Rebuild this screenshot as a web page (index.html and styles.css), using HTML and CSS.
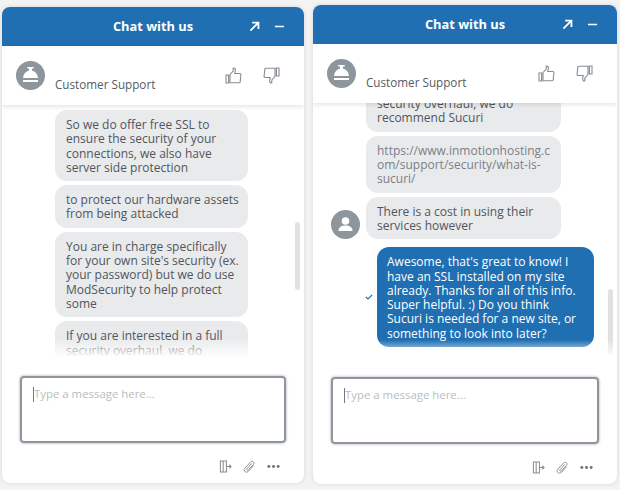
FILE: index.html
```html
<!DOCTYPE html>
<html lang="en">
<head>
  <meta charset="UTF-8">
  <title>Chat with us</title>
  <link rel="stylesheet" href="styles.css">
</head>
<body>
  <div class="chat chat-left">
    <div class="chat-head">
      <span class="chat-title">Chat with us</span>
      <svg class="head-btn btn-open" viewBox="0 0 12 12"><path d="M1.500 10.500 10 2M3.500 1.800h6.800v6.800" fill="none" stroke="#fff" stroke-width="2"/></svg>
      <svg class="head-btn btn-min" viewBox="0 0 12 12"><path d="M1 6h10" stroke="#fff" stroke-width="1.800"/></svg>
    </div>
    <div class="agent-bar">
      <svg class="avatar" viewBox="0 0 29 29">
        <circle cx="14.500" cy="14.500" r="14.500" fill="#8d959d"/>
        <path d="M7 17a7.500 7.500 0 0 1 15 0z" fill="#fff"/>
        <rect x="13" y="7" width="3" height="3" fill="#fff"/>
        <rect x="11" y="6" width="7" height="1.600" rx=".8" fill="#fff"/>
        <rect x="7" y="19" width="15" height="2" fill="#fff"/>
      </svg>
      <span class="agent-name">Customer Support</span>
      <svg class="rate rate-up" viewBox="0 0 17 17"><path d="M5 7.500 8.200 4V1.200c1.400-.4 2.200.6 2.200 1.800L9.800 6.500h5c.8 0 1.200.6 1.100 1.300l-.7 7c-.1.6-.5 1-1.100 1H5zM1 8h2.600v8H1z" fill="none" stroke="#858c93" stroke-width="1.100"/></svg>
      <svg class="rate rate-down" viewBox="0 0 17 17"><path d="M12 9.500 8.800 13v2.800c-1.400.4-2.200-.6-2.200-1.800l.6-3.500h-5c-.8 0-1.200-.6-1.100-1.300l.7-7c.1-.6.5-1 1.100-1H12zM13.400 1H16v8h-2.600z" fill="none" stroke="#858c93" stroke-width="1.100"/></svg>
    </div>
    <div class="messages">
      <div class="msg">So we do offer free SSL to ensure the security of your connections, we also have server side protection</div>
      <div class="msg">to protect our hardware assets from being attacked</div>
      <div class="msg">You are in charge specifically for your own site's security (ex. your password) but we do use ModSecurity to help protect some</div>
      <div class="msg">If you are interested in a full security overhaul, we do recommend Sucuri</div>
      <div class="scroll-thumb"></div>
      <div class="fade"></div>
    </div>
    <div class="composer">
      <div class="input-box"><span class="caret"></span><span class="placeholder">Type a message here...</span></div>
      <div class="tools">
        <svg class="tool" viewBox="0 0 14 14"><path d="M1.500 1h6.500v12H1.500zM4.500 1v12M8 7h5M11 5l2 2-2 2" fill="none" stroke="#858c93" stroke-width="1.100"/></svg>
        <svg class="tool" viewBox="0 0 14 14"><path d="M11.500 6 6 12c-1.400 1.400-3.600 1.200-4.300.2-.8-1-.6-2.400.4-3.500l6-6.500c1-1 2.300-1 3.100-.3.800.8.800 2 0 3L5.800 10.600c-.5.500-1.200.5-1.500.1-.4-.4-.3-1 .2-1.600L9.500 3.600" fill="none" stroke="#858c93" stroke-width="1"/></svg>
        <svg class="tool" viewBox="0 0 14 14"><circle cx="2" cy="7" r="1.600" fill="#6c747b"/><circle cx="7" cy="7" r="1.600" fill="#6c747b"/><circle cx="12" cy="7" r="1.600" fill="#6c747b"/></svg>
      </div>
    </div>
  </div>

  <div class="chat chat-right">
    <div class="chat-head">
      <span class="chat-title">Chat with us</span>
      <svg class="head-btn btn-open" viewBox="0 0 12 12"><path d="M1.500 10.500 10 2M3.500 1.800h6.800v6.800" fill="none" stroke="#fff" stroke-width="2"/></svg>
      <svg class="head-btn btn-min" viewBox="0 0 12 12"><path d="M1 6h10" stroke="#fff" stroke-width="1.800"/></svg>
    </div>
    <div class="agent-bar">
      <svg class="avatar" viewBox="0 0 29 29">
        <circle cx="14.500" cy="14.500" r="14.500" fill="#8d959d"/>
        <path d="M7 17a7.500 7.500 0 0 1 15 0z" fill="#fff"/>
        <rect x="13" y="7" width="3" height="3" fill="#fff"/>
        <rect x="11" y="6" width="7" height="1.600" rx=".8" fill="#fff"/>
        <rect x="7" y="19" width="15" height="2" fill="#fff"/>
      </svg>
      <span class="agent-name">Customer Support</span>
      <svg class="rate rate-up" viewBox="0 0 17 17"><path d="M5 7.500 8.200 4V1.200c1.400-.4 2.200.6 2.200 1.800L9.800 6.500h5c.8 0 1.200.6 1.100 1.300l-.7 7c-.1.6-.5 1-1.100 1H5zM1 8h2.600v8H1z" fill="none" stroke="#858c93" stroke-width="1.100"/></svg>
      <svg class="rate rate-down" viewBox="0 0 17 17"><path d="M12 9.500 8.800 13v2.800c-1.400.4-2.200-.6-2.200-1.800l.6-3.500h-5c-.8 0-1.200-.6-1.100-1.300l.7-7c.1-.6.5-1 1.100-1H12zM13.400 1H16v8h-2.600z" fill="none" stroke="#858c93" stroke-width="1.100"/></svg>
    </div>
    <div class="messages messages-end">
      <div class="msg">If you are interested in a full security overhaul, we do recommend Sucuri</div>
      <div class="msg msg-link">https://www.inmotionhosting.c<br>om/support/security/what-is-<br>sucuri/</div>
      <div class="agent-row">
        <svg class="avatar-small" viewBox="0 0 29 29">
          <circle cx="14.500" cy="14.500" r="14.500" fill="#8d959d"/>
          <circle cx="14.500" cy="11" r="3.800" fill="#fff"/>
          <path d="M7.500 21c0-4 3-5.500 7-5.500s7 1.500 7 5.500z" fill="#fff"/>
        </svg>
        <div class="msg">There is a cost in using their services however</div>
      </div>
      <div class="user-row">
        <svg class="check" viewBox="0 0 8 6"><path d="M.8 3 3 5 7.200.8" fill="none" stroke="#1f6fb2" stroke-width="1.200"/></svg>
        <div class="msg msg-user">Awesome, that's great to know! I have an SSL installed on my site already. Thanks for all of this info. Super helpful. :) Do you think Sucuri is needed for a new site, or something to look into later?</div>
      </div>
      <div class="scroll-thumb"></div>
      <div class="fade"></div>
    </div>
    <div class="composer">
      <div class="input-box"><span class="caret"></span><span class="placeholder">Type a message here...</span></div>
      <div class="tools">
        <svg class="tool" viewBox="0 0 14 14"><path d="M1.500 1h6.500v12H1.500zM4.500 1v12M8 7h5M11 5l2 2-2 2" fill="none" stroke="#858c93" stroke-width="1.100"/></svg>
        <svg class="tool" viewBox="0 0 14 14"><path d="M11.500 6 6 12c-1.400 1.400-3.600 1.200-4.300.2-.8-1-.6-2.400.4-3.500l6-6.500c1-1 2.300-1 3.100-.3.800.8.800 2 0 3L5.800 10.600c-.5.500-1.200.5-1.500.1-.4-.4-.3-1 .2-1.600L9.500 3.600" fill="none" stroke="#858c93" stroke-width="1"/></svg>
        <svg class="tool" viewBox="0 0 14 14"><circle cx="2" cy="7" r="1.600" fill="#6c747b"/><circle cx="7" cy="7" r="1.600" fill="#6c747b"/><circle cx="12" cy="7" r="1.600" fill="#6c747b"/></svg>
      </div>
    </div>
  </div>
</body>
</html>
```

FILE: styles.css
```css
body {
  margin: 0;
  padding: 0 3px 0 2px;
  box-sizing: border-box;
  width: 620px;
  height: 490px;
  overflow: hidden;
  background: #f3f3f3;
  font-family: "Open Sans", Arial, sans-serif;
  display: flex;
  gap: 9px;
  align-items: flex-start;
}
.chat {
  display: flex;
  flex-direction: column;
  background: #fff;
  border-radius: 8px;
  box-shadow: 0 0 4px rgba(0,0,0,0.12);
  overflow: hidden;
}
.chat-left {
  width: 302px;
  height: 476px;
  margin-top: 7px;
}
.chat-right {
  width: 304px;
  height: 479px;
  margin-top: 5px;
}
.chat-head {
  height: 39px;
  box-sizing: border-box;
  padding-bottom: 2px;
  flex: none;
  background: #1f6fb2;
  display: flex;
  align-items: center;
  position: relative;
  justify-content: center;
}
.chat-title {
  color: #fff;
  font-size: 12.8px;
  font-weight: 700;
}
.head-btn {
  position: absolute;
  top: 14px;
  width: 11px;
  height: 11px;
}
.btn-open {
  right: 44px;
}
.btn-min {
  right: 19px;
}
.agent-bar {
  height: 59px;
  flex: none;
  position: relative;
  z-index: 2;
  background: #fff;
  box-shadow: 0 2px 4px rgba(0,0,0,0.1);
  display: flex;
  align-items: flex-start;
  padding: 15px 24px 0 14px;
  box-sizing: border-box;
}
.avatar {
  width: 29px;
  height: 29px;
  flex: none;
}
.agent-name {
  margin: 15px 0 0 10px;
  font-size: 11.7px;
  line-height: 16px;
  color: #555b61;
  flex: 1;
}
.rate {
  width: 17px;
  height: 17px;
  margin-top: 6px;
}
.rate-down {
  margin-left: 21px;
}
.messages {
  flex: 1;
  min-height: 0;
  position: relative;
  overflow: hidden;
  display: flex;
  flex-direction: column;
  gap: 4px;
  padding: 5px 0 0 53px;
}
.messages-end {
  justify-content: flex-end;
  padding-bottom: 11px;
}
.msg {
  flex: none;
  box-sizing: border-box;
  width: 193px;
  padding: 8px 6px 6px 11px;
  background: #e9eaec;
  border-radius: 12px;
  font-size: 12px;
  line-height: 14.3px;
  color: #50565c;
}
.messages-end .msg {
  width: 195px;
}
.msg-link {
  color: #7b8187;
}
.agent-row {
  display: flex;
  align-items: flex-end;
  position: relative;
}
.avatar-small {
  position: absolute;
  left: -35px;
  bottom: 0;
  width: 29px;
  height: 29px;
}
.user-row {
  display: flex;
  align-items: center;
  margin: 4px 0 0 -1px;
  gap: 4px;
}
.check {
  width: 8px;
  height: 6px;
  flex: none;
}
.messages-end .msg-user {
  width: 217px;
  background: #1f6fb2;
  color: #fff;
  padding: 8px 8px 6px 10px;
}
.scroll-thumb {
  position: absolute;
  right: 4px;
  bottom: 67px;
  width: 5px;
  height: 68px;
  background: #dfe1e3;
  border-radius: 3px;
}
.messages-end .scroll-thumb {
  bottom: 3px;
  height: 66px;
}
.fade {
  position: absolute;
  left: 0;
  right: 0;
  bottom: 0;
  height: 18px;
  background: linear-gradient(rgba(255,255,255,0), #fff);
}
.composer {
  height: 126px;
  flex: none;
  padding: 19px 18px 0 18px;
  box-sizing: border-box;
}
.input-box {
  height: 67px;
  box-sizing: border-box;
  border: 2px solid #8e959c;
  border-radius: 4px;
  box-shadow: 0 0 2px 1px rgba(142,149,156,0.4);
  padding: 8px 11px;
  display: flex;
  align-items: flex-start;
}
.caret {
  width: 1px;
  height: 15px;
  background: #777;
  margin-top: 1px;
}
.placeholder {
  font-size: 11.4px;
  line-height: 16px;
  color: #b9bdc1;
}
.tools {
  display: flex;
  justify-content: flex-end;
  gap: 11px;
  margin-top: 17px;
  padding-right: 6px;
}
.tool {
  width: 13px;
  height: 13px;
}
```
